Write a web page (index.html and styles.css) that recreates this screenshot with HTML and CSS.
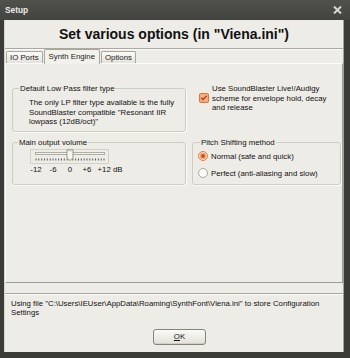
FILE: index.html
```html
<!DOCTYPE html>
<html>
<head>
<meta charset="utf-8">
<title>Setup</title>
<link rel="stylesheet" href="styles.css">
</head>
<body>
<div class="window">
  <div class="titlebar">
    <span class="title">Setup</span>
    <svg class="close" width="9" height="8" viewBox="0 0 9 8"><path d="M1 0.5 L8 7.5 M8 0.5 L1 7.5" stroke="#d6d6d2" stroke-width="2" fill="none"/></svg>
  </div>
  <div class="client">
    <div class="header"><h1>Set various options (in "Viena.ini")</h1></div>
    <div class="tabs">
      <div class="tab">IO Ports</div>
      <div class="tab active">Synth Engine</div>
      <div class="tab">Options</div>
    </div>
    <div class="panel">
      <div class="row row-top">
        <fieldset class="group group-left lowpass">
          <legend>Default Low Pass filter type</legend>
          <p class="group-text">The only LP filter type available is the fully SoundBlaster compatible "Resonant IIR lowpass (12dB/oct)"</p>
        </fieldset>
        <label class="check">
          <svg class="checkbox" width="10" height="10" viewBox="0 0 10 10">
            <rect x="0.5" y="0.5" width="9" height="9" rx="1" fill="#eea06e" stroke="#d8773c"/>
            <rect x="1.5" y="1.5" width="7" height="7" fill="#f3b48a"/>
            <path d="M2.3 4.8 L4 6.6 L7.6 2.8" stroke="#b8461c" stroke-width="1.5" fill="none"/>
          </svg>
          <span class="check-text">Use SoundBlaster Live!/Audigy scheme for envelope hold, decay and release</span>
        </label>
      </div>
      <div class="row row-bottom">
        <fieldset class="group group-left volume">
          <legend>Main output volume</legend>
          <svg class="slider" width="80" height="15" viewBox="0 0 80 15">
            <rect x="0.5" y="0.5" width="78" height="14" fill="none" stroke="#d3d1c8"/>
            <rect x="5.5" y="3.5" width="69" height="2" fill="#f4f3ef" stroke="#aeaca3"/>
            <path d="M6 9.5v2M8.8 9.5v2M11.7 9.5v2M14.5 9.5v2M17.3 9.5v2M20.2 9.5v2M23 9.5v2M25.8 9.5v2M28.7 9.5v2M31.5 9.5v2M34.3 9.5v2M37.2 9.5v2M40 9.5v2M42.8 9.5v2M45.7 9.5v2M48.5 9.5v2M51.3 9.5v2M54.2 9.5v2M57 9.5v2M59.8 9.5v2M62.7 9.5v2M65.5 9.5v2M68.3 9.5v2M71.2 9.5v2M74 9.5v2" stroke="#4a4a46" stroke-width="0.9" fill="none"/>
            <path d="M37 0.8 H43 V8.5 L40 11.5 L37 8.5 Z" fill="#f7f7f4" stroke="#8e8d86" stroke-width="0.9"/>
            <path d="M38 2 H42" stroke="#c9c7bf" stroke-width="0.8"/>
          </svg>
          <div class="scale">
            <span>-12</span><span>-6</span><span>0</span><span>+6</span><span class="last">+12 dB</span>
          </div>
        </fieldset>
        <fieldset class="group group-right pitch">
          <legend>Pitch Shifting method</legend>
          <label class="radio">
            <svg width="10" height="10" viewBox="0 0 10 10">
              <circle cx="5" cy="5" r="4.5" fill="#fbe2d0" stroke="#e07f45"/>
              <circle cx="5" cy="5" r="3.2" fill="#f0a676"/>
              <circle cx="5" cy="5" r="1.9" fill="#c9541f"/>
            </svg>
            <span>Normal (safe and quick)</span>
          </label>
          <label class="radio">
            <svg width="10" height="10" viewBox="0 0 10 10">
              <circle cx="5" cy="5" r="4.5" fill="#fbfbf9" stroke="#a9a8a1"/>
            </svg>
            <span>Perfect (anti-aliasing and slow)</span>
          </label>
        </fieldset>
      </div>
    </div>
    <div class="footer">
      <p class="footer-text">Using file "C:\Users\IEUser\AppData\Roaming\SynthFont\Viena.ini" to store Configuration Settings</p>
      <div class="actions"><button class="ok" type="button"><u>O</u>K</button></div>
    </div>
  </div>
</div>
</body>
</html>
```

FILE: styles.css
```css
* { box-sizing: border-box; }

html, body {
  margin: 0;
  padding: 0;
  background: #3a3a36;
}

body {
  font-family: "Liberation Sans", Arial, sans-serif;
  font-size: 7.8px;
  color: #111;
}

.window {
  width: 350px;
  height: 358px;
  display: flex;
  flex-direction: column;
  background: #3b3b37;
}

.titlebar {
  height: 20px;
  flex: none;
  display: flex;
  align-items: center;
  justify-content: space-between;
  padding: 0 8px 0 5px;
  background: linear-gradient(#51514c, #43433f);
}

.title {
  color: #ecece8;
  font-weight: bold;
  font-size: 8.3px;
}

.client {
  flex: 1;
  margin: 0 6px 6px 4px;
  background: #eeece7;
  border-left: 1px solid #d6d4cd;
  border-right: 1px solid #a3a29b;
  display: flex;
  flex-direction: column;
}

.header {
  height: 29px;
  flex: none;
  display: flex;
  align-items: center;
  justify-content: center;
  border-bottom: 1px solid #aaa89f;
}

.header h1 {
  margin: 0;
  font-size: 14px;
  line-height: 1;
  font-weight: bold;
  color: #111;
}

.tabs {
  height: 14px;
  flex: none;
  display: flex;
  align-items: flex-end;
  padding-left: 1px;
  box-shadow: inset 0 1px 0 #fbfaf8;
}

.tab {
  height: 12px;
  padding: 0 3px;
  line-height: 11px;
  border: 1px solid #a9a79d;
  border-bottom: none;
  border-radius: 2px 2px 0 0;
  background: linear-gradient(#fbfbf9, #e4e2da);
  color: #222;
  white-space: nowrap;
}

.tab.active {
  height: 15px;
  margin: 0 -1px -1px 0;
  padding: 0 4px;
  line-height: 13px;
  background: #f2f1ec;
  position: relative;
  z-index: 1;
}

.tab + .tab { margin-left: 1px; }
.tab.active + .tab { margin-left: 2px; }

.panel {
  height: 220px;
  flex: none;
  border: 1px solid;
  border-color: #fcfcfa #9e9c94 #9e9c94 #fcfcfa;
  background: #eeece7;
  padding: 20px 1px 0 6px;
  overflow: hidden;
}

.row {
  display: flex;
}

.row-top { align-items: flex-start; }
.row-bottom { margin-top: 6px; align-items: stretch; }

.group {
  margin: 0;
  border: 1px solid #cfcdc3;
  border-radius: 3px;
  box-shadow: 1px 1px 0 #fbfaf7;
  min-width: 0;
}

.group legend {
  padding: 0 1px;
  line-height: 9.5px;
  color: #111;
}

.group-left {
  width: 174px;
  flex: none;
}

.group-text {
  margin: 0;
  line-height: 9.7px;
}

.lowpass {
  padding: 4.5px 10px 4px 16px;
}

.lowpass legend { margin-left: -10px; }

.check {
  display: flex;
  align-items: center;
  margin-left: 13px;
}

.checkbox { flex: none; }

.check-text {
  width: 118px;
  margin-left: 3px;
  line-height: 9.5px;
}

.volume {
  padding: 1.5px 4px 9px 17px;
}

.volume legend { margin-left: -12px; }

.slider { display: block; }

.scale {
  display: flex;
  margin: 1px 0 0 -2.5px;
  line-height: 9.5px;
}

.scale span {
  width: 17px;
  text-align: center;
}

.scale span.last {
  width: auto;
  margin-left: 2px;
  text-align: left;
}

.group-right {
  flex: 1;
  margin-left: 6px;
  padding: 2.5px 4px 5px 5px;
}

.pitch legend { margin-left: 2px; }

.radio {
  display: flex;
  align-items: center;
  height: 12px;
}

.radio + .radio { margin-top: 5px; }

.radio svg { flex: none; margin-right: 3px; }

.footer {
  flex: 1;
  margin-top: 10px;
  border-top: 1px solid #a9a79f;
  box-shadow: inset 0 1px 0 #fcfcfa;
  padding: 5px 8px 0 6px;
}

.footer-text {
  margin: 0;
  line-height: 9.4px;
}

.actions {
  display: flex;
  margin-top: 11px;
}

.ok {
  margin-left: 142px;
  width: 53px;
  height: 16px;
  padding: 0;
  font-family: "Liberation Sans", Arial, sans-serif;
  font-size: 7.8px;
  color: #111;
  border: 1px solid #85847c;
  border-radius: 3px;
  background: linear-gradient(#fafaf7, #e2e0d8);
  box-shadow: inset 0 -1px 0 #d2d0c7;
}

.ok u { text-decoration: underline; }
```
